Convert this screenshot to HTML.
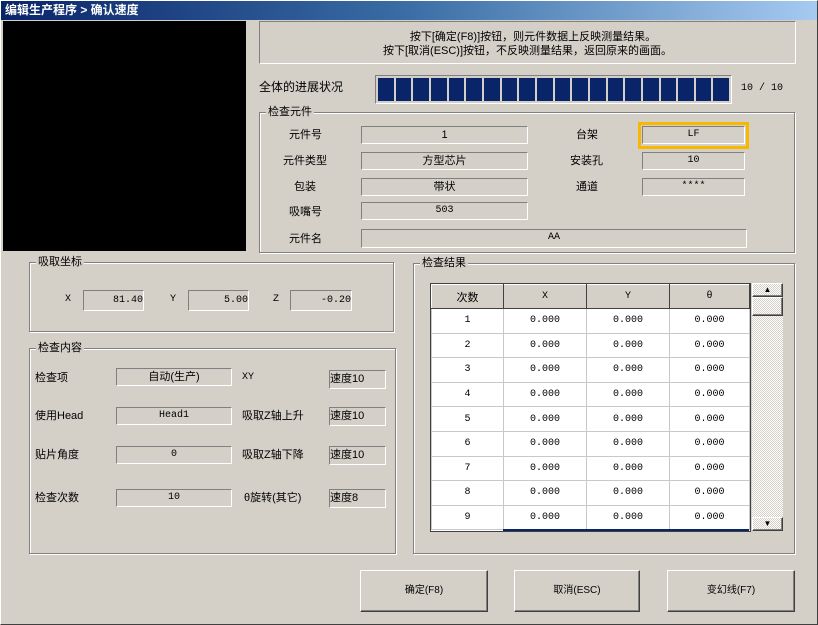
<!DOCTYPE html>
<html><head><meta charset="utf-8"><style>
*{margin:0;padding:0;box-sizing:border-box}
body{width:818px;height:625px;background:#d4d0c8;position:relative;overflow:hidden;font-family:"Liberation Sans","Noto Sans CJK SC",sans-serif;font-size:11px;color:#000}
.a{position:absolute}
.t{position:absolute;white-space:nowrap;line-height:14px}
.sk{position:absolute;border-top:1px solid #808080;border-left:1px solid #808080;border-bottom:1px solid #fff;border-right:1px solid #fff;text-align:center;line-height:16px;white-space:nowrap}
.grp{position:absolute;border:1px solid #808080;box-shadow:1px 1px 0 #fff, inset 1px 1px 0 #fff}
.lg{position:absolute;top:-8px;left:6px;background:#d4d0c8;padding:0 2px;line-height:14px;font-size:11px}
.btn{position:absolute;border-top:1px solid #fff;border-left:1px solid #fff;border-right:1px solid #404040;border-bottom:1px solid #404040;box-shadow:inset -1px -1px 0 #808080;text-align:center;line-height:40px;font-size:10px}
table{border-collapse:collapse;background:#fff}
td{border:1px solid #c8c8c8;text-align:center;height:24.6px;font-family:"Liberation Mono","Noto Sans CJK SC",monospace;font-size:10px}
th{background:#d4d0c8;font-weight:normal;height:24px;border-top:1px solid #fff;border-left:1px solid #fff;border-right:1px solid #404040;border-bottom:1px solid #404040;font-size:11px}
.m{font-family:"Liberation Mono","Noto Sans CJK SC",monospace;font-size:10px}
</style></head><body>
<div class="a" style="left:0;top:0;width:818px;height:625px;border:1px solid #fff;border-right-color:#404040;border-bottom-color:#404040"></div>
<div class="a" style="left:1px;top:1px;width:816px;height:19px;background:linear-gradient(90deg,#0a246a 0%,#3a6ea5 50%,#a6caf0 100%)"></div>
<div class="t" style="left:5px;top:3px;color:#fff;font-weight:bold;font-size:12px">编辑生产程序 &gt; 确认速度</div>
<div class="a" style="left:3px;top:21px;width:243px;height:230px;background:#000"></div>

<div class="sk" style="left:259px;top:21px;width:537px;height:43px;border-top-color:#808080"></div>
<div class="t" style="left:259px;width:537px;text-align:center;top:30px;font-size:11px">　按下[确定(F8)]按钮，则元件数据上反映测量结果。<br>按下[取消(ESC)]按钮，不反映测量结果，返回原来的画面。</div>

<div class="t" style="left:259px;top:80px;font-size:12px">全体的进展状况</div>
<div class="a" style="left:375px;top:75px;width:357px;height:29px;border:1px solid #808080;border-right-color:#fff;border-bottom-color:#fff;background:#d4d0c8;padding:2px 0 2px 2px;display:flex;gap:2px">
<div style="flex:1;background:#0a246a"></div><div style="flex:1;background:#0a246a"></div><div style="flex:1;background:#0a246a"></div><div style="flex:1;background:#0a246a"></div><div style="flex:1;background:#0a246a"></div><div style="flex:1;background:#0a246a"></div><div style="flex:1;background:#0a246a"></div><div style="flex:1;background:#0a246a"></div><div style="flex:1;background:#0a246a"></div><div style="flex:1;background:#0a246a"></div><div style="flex:1;background:#0a246a"></div><div style="flex:1;background:#0a246a"></div><div style="flex:1;background:#0a246a"></div><div style="flex:1;background:#0a246a"></div><div style="flex:1;background:#0a246a"></div><div style="flex:1;background:#0a246a"></div><div style="flex:1;background:#0a246a"></div><div style="flex:1;background:#0a246a"></div><div style="flex:1;background:#0a246a"></div><div style="flex:1;background:#0a246a;margin-right:2px"></div></div>
<div class="t m" style="left:741px;top:82px">10 / 10</div>

<div class="grp" style="left:259px;top:112px;width:536px;height:141px"><div class="lg">检查元件</div></div>
<div class="t" style="left:289px;top:128px">元件号</div><div class="sk" style="left:361px;top:126px;width:167px;height:18px">1</div>
<div class="t" style="left:283px;top:154px">元件类型</div><div class="sk" style="left:361px;top:152px;width:167px;height:18px">方型芯片</div>
<div class="t" style="left:294px;top:180px">包装</div><div class="sk" style="left:361px;top:178px;width:167px;height:18px">带状</div>
<div class="t" style="left:289px;top:205px">吸嘴号</div><div class="sk m" style="left:361px;top:202px;width:167px;height:18px">503</div>
<div class="t" style="left:289px;top:232px">元件名</div><div class="sk m" style="left:361px;top:229px;width:386px;height:19px">AA</div>
<div class="t" style="left:576px;top:128px">台架</div>
<div class="a" style="left:638px;top:122px;width:111px;height:27px;border:3px solid #f8b800"></div>
<div class="sk m" style="left:642px;top:126px;width:103px;height:18px">LF</div>
<div class="t" style="left:570px;top:154px">安装孔</div><div class="sk m" style="left:642px;top:152px;width:103px;height:18px">10</div>
<div class="t" style="left:576px;top:180px">通道</div><div class="sk m" style="left:642px;top:178px;width:103px;height:18px">****</div>

<div class="grp" style="left:29px;top:262px;width:365px;height:70px"><div class="lg">吸取坐标</div></div>
<div class="t m" style="left:65px;top:293px">X</div><div class="sk m" style="left:83px;top:290px;width:61px;height:21px;text-align:right;line-height:19px">81.40</div>
<div class="t m" style="left:170px;top:293px">Y</div><div class="sk m" style="left:188px;top:290px;width:61px;height:21px;text-align:right;line-height:19px">5.00</div>
<div class="t m" style="left:273px;top:293px">Z</div><div class="sk m" style="left:290px;top:290px;width:62px;height:21px;text-align:right;line-height:19px">-0.20</div>

<div class="grp" style="left:29px;top:348px;width:367px;height:206px"><div class="lg">检查内容</div></div>
<div class="t" style="left:35px;top:371px">检查项</div><div class="sk" style="left:116px;top:368px;width:116px;height:18px">自动(生产)</div>
<div class="t m" style="left:242px;top:371px">XY</div><div class="sk" style="left:329px;top:370px;width:57px;height:19px;text-align:left">速度10</div>
<div class="t" style="left:35px;top:409px">使用Head</div><div class="sk m" style="left:116px;top:407px;width:116px;height:18px">Head1</div>
<div class="t" style="left:242px;top:409px">吸取Z轴上升</div><div class="sk" style="left:329px;top:407px;width:57px;height:19px;text-align:left">速度10</div>
<div class="t" style="left:35px;top:448px">贴片角度</div><div class="sk m" style="left:116px;top:446px;width:116px;height:18px">0</div>
<div class="t" style="left:242px;top:448px">吸取Z轴下降</div><div class="sk" style="left:329px;top:446px;width:57px;height:19px;text-align:left">速度10</div>
<div class="t" style="left:35px;top:491px">检查次数</div><div class="sk m" style="left:116px;top:489px;width:116px;height:18px">10</div>
<div class="t" style="left:244px;top:491px">θ旋转(其它)</div><div class="sk" style="left:329px;top:489px;width:57px;height:19px;text-align:left">速度8</div>

<div class="grp" style="left:413px;top:263px;width:382px;height:291px"><div class="lg">检查结果</div></div>
<div class="a" style="left:430px;top:283px;width:321px;height:249px;border:1px solid #404040;background:#fff;overflow:hidden">
<table style="width:319px">
<tr><th style="width:72px">次数</th><th style="width:83px" class="m">X</th><th style="width:83px" class="m">Y</th><th class="m">θ</th></tr>
<tr><td>1</td><td>0.000</td><td>0.000</td><td>0.000</td></tr>
<tr><td>2</td><td>0.000</td><td>0.000</td><td>0.000</td></tr>
<tr><td>3</td><td>0.000</td><td>0.000</td><td>0.000</td></tr>
<tr><td>4</td><td>0.000</td><td>0.000</td><td>0.000</td></tr>
<tr><td>5</td><td>0.000</td><td>0.000</td><td>0.000</td></tr>
<tr><td>6</td><td>0.000</td><td>0.000</td><td>0.000</td></tr>
<tr><td>7</td><td>0.000</td><td>0.000</td><td>0.000</td></tr>
<tr><td>8</td><td>0.000</td><td>0.000</td><td>0.000</td></tr>
<tr><td>9</td><td>0.000</td><td>0.000</td><td>0.000</td></tr>
</table></div>
<div class="a" style="left:503px;top:529px;width:246px;height:2px;background:#0a246a"></div>
<div class="a" style="left:752px;top:283px;width:31px;height:248px;background:repeating-conic-gradient(#d4d0c8 0 25%,#fff 0 50%) 0 0/2px 2px"></div>
<div class="btn" style="left:752px;top:283px;width:31px;height:14px;line-height:12px;font-size:8px">▲</div>
<div class="btn" style="left:752px;top:297px;width:31px;height:19px"></div>
<div class="btn" style="left:752px;top:517px;width:31px;height:14px;line-height:12px;font-size:8px">▼</div>

<div class="btn" style="left:360px;top:570px;width:128px;height:42px">确定(F8)</div>
<div class="btn" style="left:514px;top:570px;width:126px;height:42px">取消(ESC)</div>
<div class="btn" style="left:667px;top:570px;width:128px;height:42px">变幻线(F7)</div>
</body></html>
